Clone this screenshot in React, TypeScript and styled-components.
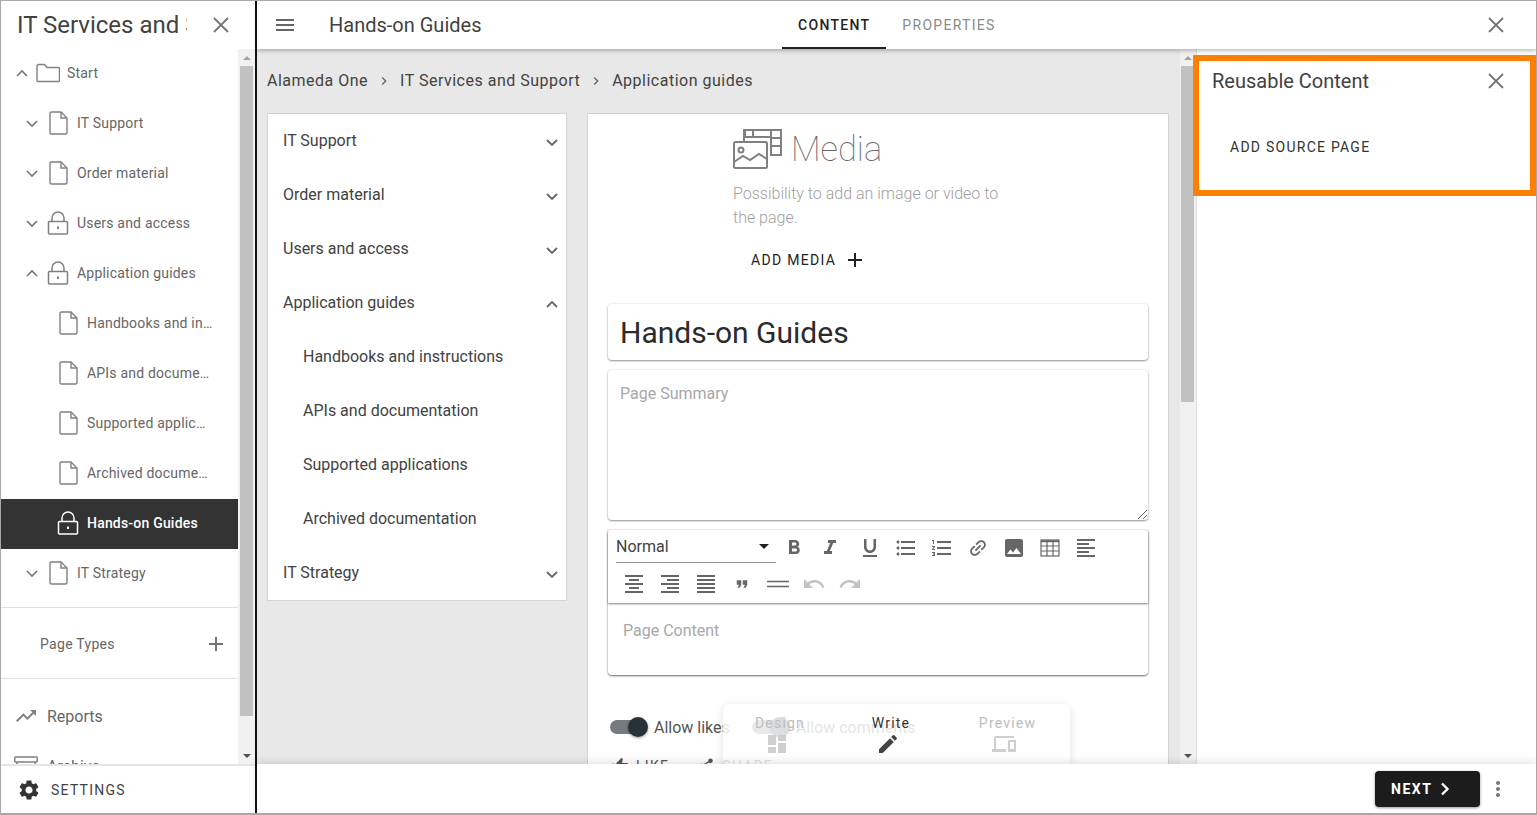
import * as React from 'react';
import styled, { createGlobalStyle } from 'styled-components';
import {
  MdKeyboardArrowRight, MdAdd, MdMenu, MdSettings, MdTrendingUp,
  MdFormatBold, MdFormatItalic, MdFormatUnderlined, MdFormatListBulleted, MdFormatListNumbered, MdLink, MdImage,
  MdFormatAlignLeft, MdFormatAlignCenter, MdFormatAlignRight, MdFormatAlignJustify, MdFormatQuote, MdUndo, MdRedo,
  MdEdit, MdDashboard, MdDevices, MdMoreVert, MdThumbUp, MdShare, MdArrowDropDown,
} from 'react-icons/md';

const GlobalStyle = createGlobalStyle`
  html, body {
    margin: 0;
    padding: 0;
    overflow: hidden;
    background: #fff;
  }
  * {
    box-sizing: border-box;
  }
`;

const Page = styled.div`
  width: 1537px;
  height: 815px;
  border: 1px solid #a8a8a8;
  border-bottom-width: 2px;
  display: flex;
  overflow: hidden;
  font-family: Roboto, "Liberation Sans", sans-serif;
  color: #424242;
`;

/* ---- left sidebar ---- */

const Sidebar = styled.aside`
  width: 256px;
  flex: none;
  display: flex;
  flex-direction: column;
  border-right: 2px solid #111;
  background: #fff;
`;

const SidebarHeader = styled.div`
  height: 48px;
  flex: none;
  display: flex;
  align-items: center;
  padding-left: 16px;
`;

const SidebarTitle = styled.div`
  width: 170px;
  font-size: 24px;
  white-space: nowrap;
  overflow: hidden;
  color: #424242;
`;

const HeaderClose = styled.span`
  margin-left: 22px;
  display: flex;
  color: #757575;
`;

const SidebarBody = styled.div`
  flex: 1;
  min-height: 0;
  display: flex;
`;

const TreeColumn = styled.div`
  width: 237px;
  flex: none;
  overflow: hidden;
`;

const TreeRow = styled.div<{ $depth: number; $active?: boolean }>`
  height: 50px;
  display: flex;
  align-items: center;
  padding-left: ${(p) => 7 + p.$depth * 10}px;
  padding-bottom: 2px;
  background: ${(p) => (p.$active ? '#333' : 'transparent')};
  color: ${(p) => (p.$active ? '#fff' : '#666')};
  font-size: 14px;
  font-weight: ${(p) => (p.$active ? 500 : 400)};
  letter-spacing: 0.2px;
`;

const Caret = styled.span`
  width: 28px;
  height: 24px;
  flex: none;
  display: flex;
  align-items: center;
  justify-content: center;
  color: #757575;
`;

const TreeIcon = styled.span`
  width: 24px;
  flex: none;
  display: flex;
  justify-content: center;
`;

const TreeLabel = styled.span`
  margin-left: 7px;
  max-width: 125.5px;
  overflow: hidden;
  white-space: nowrap;
  text-overflow: ellipsis;
`;

const Divider = styled.div<{ $gap?: number }>`
  height: 1px;
  margin-top: ${(p) => p.$gap ?? 0}px;
  background: #e0e0e0;
`;

const PageTypes = styled.div`
  height: 70px;
  display: flex;
  align-items: center;
  justify-content: space-between;
  padding: 2px 10px 0 39px;
  font-size: 14px;
  letter-spacing: 0.3px;
  color: #666;
`;

const NavList = styled.div`
  padding-top: 12px;
`;

const NavRow = styled.div`
  height: 50px;
  display: flex;
  align-items: center;
  padding-left: 13px;
  gap: 9px;
  font-size: 16px;
  color: #666;
`;

const SidebarFooter = styled.div`
  height: 49px;
  flex: none;
  display: flex;
  align-items: center;
  gap: 10px;
  padding-left: 16px;
  border-top: 2px solid #e6e6e6;
  font-size: 14px;
  letter-spacing: 1.25px;
  color: #424242;
`;

/* ---- scrollbars ---- */

const ScrollTrack = styled.div<{ $wide?: boolean }>`
  width: ${(p) => (p.$wide ? 17 : 16)}px;
  flex: none;
  display: flex;
  flex-direction: column;
  background: #f1f1f1;
`;

const ScrollArrow = styled.div<{ $up?: boolean }>`
  width: 100%;
  height: 17px;
  flex: none;
  display: flex;
  align-items: center;
  justify-content: center;
  &::before {
    content: '';
    border-left: 4px solid transparent;
    border-right: 4px solid transparent;
    ${(p) => (p.$up ? 'border-bottom: 4px solid #a3a3a3;' : 'border-top: 4px solid #505050;')}
  }
`;

const ScrollThumb = styled.div<{ $height: number; $wide?: boolean }>`
  width: 13px;
  height: ${(p) => p.$height}px;
  margin-left: ${(p) => (p.$wide ? 2 : 1)}px;
  flex: none;
  background: #c1c1c1;
`;

const ScrollFill = styled.div`
  flex: 1;
`;

/* ---- main column ---- */

const Main = styled.main`
  flex: 1;
  min-width: 0;
  display: flex;
  flex-direction: column;
`;

const TopBar = styled.header`
  height: 48px;
  flex: none;
  position: relative;
  z-index: 3;
  display: grid;
  grid-template-columns: 72px 453px auto 1fr auto;
  align-items: center;
  background: #fff;
  box-shadow: 0 2px 4px rgba(0, 0, 0, 0.25);
  padding-right: 28px;
`;

const MenuButton = styled.span`
  display: flex;
  justify-content: center;
  padding-right: 16px;
  color: #666;
`;

const TopTitle = styled.div`
  font-size: 20px;
  padding-bottom: 1px;
  color: #424242;
`;

const Tabs = styled.nav`
  display: flex;
  height: 48px;
`;

const Tab = styled.div<{ $active?: boolean }>`
  display: flex;
  align-items: center;
  padding: 2px 16px 0;
  font-size: 14px;
  font-weight: ${(p) => (p.$active ? 500 : 400)};
  letter-spacing: 1.3px;
  color: ${(p) => (p.$active ? '#222' : '#8a8a8a')};
  border-bottom: 2px solid ${(p) => (p.$active ? '#222' : 'transparent')};
`;

const TopClose = styled.span`
  grid-column: 5;
  display: flex;
  color: #757575;
`;

const Workspace = styled.div`
  flex: 1;
  min-height: 0;
  display: flex;
  position: relative;
`;

const CenterScroll = styled.div`
  width: 923px;
  flex: none;
  overflow: hidden;
  background: #e8e8e8;
  padding: 0 11px 0 10px;
`;

const Breadcrumbs = styled.div`
  height: 64px;
  padding-bottom: 2px;
  display: flex;
  align-items: center;
  font-size: 16px;
  letter-spacing: 0.5px;
  color: #424242;
`;

const CrumbSep = styled.span`
  display: flex;
  margin: 2px 8px 0;
  color: #666;
`;

const Columns = styled.div`
  display: flex;
  align-items: flex-start;
  gap: 20px;
`;

const NavCard = styled.div`
  width: 300px;
  flex: none;
  background: #fff;
  border: 1px solid #d4d4d4;
`;

const NavItem = styled.div<{ $sub?: boolean }>`
  height: 54px;
  display: flex;
  align-items: center;
  justify-content: space-between;
  padding: 0 7px 2px ${(p) => (p.$sub ? 35 : 15)}px;
  font-size: 16px;
  color: #424242;
`;

const NavCaret = styled.span`
  display: flex;
  margin-top: 4px;
  color: #666;
`;

const ContentCard = styled.div`
  width: 582px;
  flex: none;
  height: 720px;
  background: #fff;
  border: 1px solid #d4d4d4;
  padding: 0 20px;
`;

const MediaBlock = styled.section`
  margin-left: 125px;
  width: 280px;
  height: 190px;
  padding-top: 14px;
`;

const MediaHead = styled.div`
  display: flex;
  align-items: center;
  gap: 8px;
  height: 42px;
`;

const MediaTitle = styled.div`
  font-size: 34.5px;
  font-weight: 100;
  color: #666;
`;

const MediaText = styled.p`
  margin: 12px 0 0;
  font-size: 16px;
  line-height: 24px;
  font-weight: 300;
  color: #a0a0a0;
`;

const TextButton = styled.div`
  display: flex;
  align-items: center;
  gap: 7px;
  margin: 18px 0 0 18px;
  font-size: 14px;
  letter-spacing: 1.3px;
  color: #222;
`;

const TitleField = styled.div`
  height: 56px;
  display: flex;
  align-items: center;
  padding-left: 12px;
  border-radius: 4px;
  box-shadow: 0 1px 2px rgba(0, 0, 0, 0.4), 0 0 3px rgba(0, 0, 0, 0.1);
  font-size: 30px;
  color: #2b2b2b;
`;

const SummaryField = styled.div`
  position: relative;
  height: 150px;
  margin-top: 10px;
  padding: 14px 12px;
  border-radius: 4px;
  box-shadow: 0 1px 2px rgba(0, 0, 0, 0.4), 0 0 3px rgba(0, 0, 0, 0.1);
  font-size: 16px;
  color: #a8a8a8;
`;

const ResizeGrip = styled.svg`
  position: absolute;
  right: 1px;
  bottom: 1px;
`;

const Editor = styled.div`
  margin-top: 10px;
  height: 145px;
  border-radius: 4px;
  box-shadow: 0 1px 2px rgba(0, 0, 0, 0.55), 0 0 3px rgba(0, 0, 0, 0.1);
`;

const EditorToolbar = styled.div`
  height: 73px;
  display: flex;
  flex-wrap: wrap;
  align-content: flex-start;
  padding-left: 8px;
  box-shadow: 0 1px 2px rgba(0, 0, 0, 0.5);
`;

const StyleSelect = styled.div`
  width: 160px;
  height: 33px;
  display: flex;
  align-items: center;
  justify-content: space-between;
  border-bottom: 1px solid #8f8f8f;
  font-size: 16px;
  color: #424242;
`;

const ToolButton = styled.span<{ $muted?: boolean; $gap?: number }>`
  width: 36px;
  height: 36px;
  margin-left: ${(p) => p.$gap ?? 0}px;
  display: flex;
  align-items: center;
  justify-content: center;
  color: ${(p) => (p.$muted ? '#c2c2c2' : '#666')};
`;

const ToolBreak = styled.div`
  width: 100%;
  height: 0;
`;

const EditorBody = styled.div`
  padding: 18px 15px;
  font-size: 16px;
  color: #a8a8a8;
`;

const ToggleRow = styled.div`
  display: flex;
  align-items: center;
  height: 40px;
  margin-top: 32px;
  padding-left: 2px;
  font-size: 16px;
  color: #555;
`;

const Toggle = styled.span`
  position: relative;
  width: 30px;
  height: 14px;
  border-radius: 7px;
  background: #757c7f;
  flex: none;
  &::after {
    content: '';
    position: absolute;
    left: 18px;
    top: -3px;
    width: 20px;
    height: 20px;
    border-radius: 50%;
    background: #263238;
    box-shadow: 0 1px 3px rgba(0, 0, 0, 0.4);
  }
`;

const ToggleLabel = styled.span`
  margin: 0 22px 0 14px;
`;

const SocialRow = styled.div`
  display: flex;
  align-items: center;
  gap: 7px;
  margin-top: 10px;
  padding-left: 3px;
  font-size: 14px;
  letter-spacing: 1.3px;
  color: #555;
`;

const SocialGap = styled.span`
  width: 14px;
`;

const ModeSwitch = styled.div`
  position: absolute;
  left: 466px;
  bottom: 0;
  width: 347px;
  height: 60px;
  display: grid;
  grid-template-columns: 114px 108px 125px;
  background: rgba(255, 255, 255, 0.84);
  border-radius: 8px 8px 0 0;
  box-shadow: 0 2px 10px rgba(0, 0, 0, 0.12);
`;

const ModeItem = styled.div<{ $active?: boolean }>`
  display: flex;
  flex-direction: column;
  align-items: center;
  padding-top: 11px;
  font-size: 14px;
  letter-spacing: 1.2px;
  color: ${(p) => (p.$active ? '#333' : '#bdbdbd')};
  line-height: 16px;
`;

const ModeIcon = styled.span<{ $active?: boolean }>`
  display: flex;
  margin: 1px 7px 0 0;
  color: ${(p) => (p.$active ? '#444' : '#cfcfcf')};
`;

const RightPanel = styled.aside`
  flex: 1;
  min-width: 0;
  position: relative;
  background: #fff;
  border-left: 1px solid #e0e0e0;
`;

const PanelHeader = styled.div`
  display: flex;
  align-items: center;
  justify-content: space-between;
  height: 24px;
  margin: 20px 28px 0 15px;
  font-size: 20px;
  color: #424242;
`;

const PanelClose = styled.span`
  display: flex;
  color: #757575;
`;

const PanelAction = styled.div`
  margin: 46px 0 0 33px;
  font-size: 14px;
  letter-spacing: 1.25px;
  color: #333;
`;

const Highlight = styled.div`
  position: absolute;
  left: -4px;
  right: 0;
  top: 6px;
  height: 141px;
  border: 6px solid #ff8000;
  pointer-events: none;
`;

const BottomBar = styled.footer`
  height: 49px;
  flex: none;
  position: relative;
  z-index: 3;
  display: flex;
  align-items: center;
  justify-content: flex-end;
  gap: 6px;
  padding-right: 26px;
  background: #fff;
  box-shadow: 0 -2px 8px rgba(0, 0, 0, 0.12);
`;

const NextButton = styled.div`
  width: 105px;
  height: 36px;
  display: flex;
  align-items: center;
  gap: 8px;
  padding-left: 16px;
  border-radius: 4px;
  background: #1c1c1c;
  color: #fff;
  font-size: 14px;
  font-weight: 700;
  letter-spacing: 1.5px;
  box-shadow: 0 1px 3px rgba(0, 0, 0, 0.4);
`;

const MoreButton = styled.span`
  display: flex;
  color: #757575;
`;

/* ---- drawn icons ---- */

const CloseX: React.FC = () => (
  <svg width="24" height="24" viewBox="0 0 24 24" fill="none" stroke="currentColor" strokeWidth="1.8">
    <path d="M5 5l14 14M19 5L5 19" />
  </svg>
);

const Chevron: React.FC<{ up?: boolean; weight?: number }> = ({ up, weight = 1.6 }) => (
  <svg width="14" height="10" viewBox="0 0 14 10" fill="none" stroke="currentColor" strokeWidth={weight}>
    <path d={up ? 'M2 8l5-5 5 5' : 'M2 3l5 5 5-5'} />
  </svg>
);

const NextChevron: React.FC = () => (
  <svg width="10" height="14" viewBox="0 0 10 14" fill="none" stroke="currentColor" strokeWidth="2.4">
    <path d="M2 1.5L7.5 7 2 12.5" />
  </svg>
);

const FolderIcon: React.FC = () => (
  <svg width="24" height="20" viewBox="0 0 24 20" fill="none" stroke="#808080" strokeWidth="1.4">
    <path d="M1 17.5V3a1.5 1.5 0 0 1 1.5-1.5h6L11 4.5h11.5A1 1 0 0 1 23.5 5.5v12a1 1 0 0 1-1 1h-20.5a1 1 0 0 1-1-1z" />
  </svg>
);

const PageIcon: React.FC = () => (
  <svg width="19" height="24" viewBox="0 0 19 24" fill="none" stroke="#808080" strokeWidth="1.4">
    <path d="M12 1H2.5A1.5 1.5 0 0 0 1 2.5v19A1.5 1.5 0 0 0 2.5 23h14a1.5 1.5 0 0 0 1.5-1.5V7z" />
    <path d="M12 1v6h6" />
  </svg>
);

const LockIcon: React.FC<{ color?: string }> = ({ color = '#808080' }) => (
  <svg width="22" height="24" viewBox="0 0 22 24" fill="none" stroke={color} strokeWidth="1.5">
    <path d="M2.5 10.5h17a1 1 0 0 1 1 1v10.5a1 1 0 0 1-1 1h-17a1 1 0 0 1-1-1V11.5a1 1 0 0 1 1-1z" />
    <path d="M5 10.5V7a6 6 0 0 1 12 0v3.5" />
    <path d="M11 15.5v2.5" strokeWidth="2" />
  </svg>
);

const ArchiveIcon: React.FC = () => (
  <svg width="24" height="24" viewBox="0 0 24 24" fill="none" stroke="#808080" strokeWidth="1.5">
    <rect x="0.75" y="3" width="22.5" height="5" rx="1" />
    <path d="M3 8v13h18V8" />
  </svg>
);

const MediaIcon: React.FC = () => (
  <svg width="50" height="40" viewBox="0 0 50 40" fill="none" stroke="#808080" strokeWidth="2">
    <rect x="1" y="13" width="33" height="26" rx="1.5" />
    <circle cx="8" cy="21" r="2.5" />
    <path d="M1 33l9-6 7 4 9-6 8 5" />
    <path d="M11 13V1h37v25H37" />
    <rect x="12" y="1" width="8" height="7" />
    <path d="M38 1v25M38 9h10M38 17h10M20 8h18" />
  </svg>
);

const TableIcon: React.FC = () => (
  <svg width="20" height="20" viewBox="0 0 20 20" fill="none" stroke="#666" strokeWidth="1.2">
    <rect x="1" y="2" width="18" height="16" />
    <path d="M1 3.2h18" strokeWidth="2" />
    <path d="M1 8h18M1 13h18M7 3v15M13 3v15" />
  </svg>
);

const RuleIcon: React.FC = () => (
  <svg width="22" height="10" viewBox="0 0 22 10" fill="none" stroke="#666" strokeWidth="1.5">
    <path d="M0 2.5h22M0 7.5h22" />
  </svg>
);

type TreeItem = {
  label: string;
  depth: number;
  icon: 'folder' | 'page' | 'lock';
  caret?: 'up' | 'down';
  active?: boolean;
};

const tree: TreeItem[] = [
  { label: 'Start', depth: 0, icon: 'folder', caret: 'up' },
  { label: 'IT Support', depth: 1, icon: 'page', caret: 'down' },
  { label: 'Order material', depth: 1, icon: 'page', caret: 'down' },
  { label: 'Users and access', depth: 1, icon: 'lock', caret: 'down' },
  { label: 'Application guides', depth: 1, icon: 'lock', caret: 'up' },
  { label: 'Handbooks and instructions', depth: 2, icon: 'page' },
  { label: 'APIs and documentation', depth: 2, icon: 'page' },
  { label: 'Supported applications', depth: 2, icon: 'page' },
  { label: 'Archived documentation', depth: 2, icon: 'page' },
  { label: 'Hands-on Guides', depth: 2, icon: 'lock', active: true },
  { label: 'IT Strategy', depth: 1, icon: 'page', caret: 'down' },
];

const navItems: { label: string; sub?: boolean; caret?: 'up' | 'down' }[] = [
  { label: 'IT Support', caret: 'down' },
  { label: 'Order material', caret: 'down' },
  { label: 'Users and access', caret: 'down' },
  { label: 'Application guides', caret: 'up' },
  { label: 'Handbooks and instructions', sub: true },
  { label: 'APIs and documentation', sub: true },
  { label: 'Supported applications', sub: true },
  { label: 'Archived documentation', sub: true },
  { label: 'IT Strategy', caret: 'down' },
];

const Scrollbar: React.FC<{ thumb: number; wide?: boolean }> = ({ thumb, wide }) => (
  <ScrollTrack $wide={wide}>
    <ScrollArrow $up />
    <ScrollThumb $height={thumb} $wide={wide} />
    <ScrollFill />
    <ScrollArrow />
  </ScrollTrack>
);

const App: React.FC = () => (
  <Page>
    <GlobalStyle />
    <Sidebar>
      <SidebarHeader>
        <SidebarTitle>IT Services and Support</SidebarTitle>
        <HeaderClose>
          <CloseX />
        </HeaderClose>
      </SidebarHeader>
      <SidebarBody>
        <TreeColumn>
          {tree.map((item) => (
            <TreeRow key={item.label} $depth={item.depth} $active={item.active}>
              <Caret>{item.caret && <Chevron up={item.caret === 'up'} />}</Caret>
              <TreeIcon>
                {item.icon === 'folder' && <FolderIcon />}
                {item.icon === 'page' && <PageIcon />}
                {item.icon === 'lock' && <LockIcon color={item.active ? '#fff' : undefined} />}
              </TreeIcon>
              <TreeLabel>{item.label}</TreeLabel>
            </TreeRow>
          ))}
          <Divider $gap={8} />
          <PageTypes>
            Page Types
            <MdAdd size={24} color="#757575" />
          </PageTypes>
          <Divider />
          <NavList>
            <NavRow>
              <MdTrendingUp size={24} color="#808080" />
              Reports
            </NavRow>
            <NavRow>
              <ArchiveIcon />
              Archive
            </NavRow>
          </NavList>
        </TreeColumn>
        <Scrollbar thumb={650} wide />
      </SidebarBody>
      <SidebarFooter>
        <MdSettings size={24} color="#333" />
        SETTINGS
      </SidebarFooter>
    </Sidebar>

    <Main>
      <TopBar>
        <MenuButton>
          <MdMenu size={24} />
        </MenuButton>
        <TopTitle>Hands-on Guides</TopTitle>
        <Tabs>
          <Tab $active>CONTENT</Tab>
          <Tab>PROPERTIES</Tab>
        </Tabs>
        <TopClose>
          <CloseX />
        </TopClose>
      </TopBar>

      <Workspace>
        <CenterScroll>
          <Breadcrumbs>
            Alameda One
            <CrumbSep>
              <MdKeyboardArrowRight size={16} />
            </CrumbSep>
            IT Services and Support
            <CrumbSep>
              <MdKeyboardArrowRight size={16} />
            </CrumbSep>
            Application guides
          </Breadcrumbs>
          <Columns>
            <NavCard>
              {navItems.map((item) => (
                <NavItem key={item.label} $sub={item.sub}>
                  {item.label}
                  <NavCaret>{item.caret && <Chevron up={item.caret === 'up'} weight={1.8} />}</NavCaret>
                </NavItem>
              ))}
            </NavCard>
            <ContentCard>
              <MediaBlock>
                <MediaHead>
                  <MediaIcon />
                  <MediaTitle>Media</MediaTitle>
                </MediaHead>
                <MediaText>Possibility to add an image or video to the page.</MediaText>
                <TextButton>
                  ADD MEDIA
                  <MdAdd size={24} color="#222" />
                </TextButton>
              </MediaBlock>
              <TitleField>Hands-on Guides</TitleField>
              <SummaryField>
                Page Summary
                <ResizeGrip width="10" height="10" viewBox="0 0 10 10" stroke="#666" strokeWidth="1">
                  <path d="M1 10L10 1M6 10l4-4" />
                </ResizeGrip>
              </SummaryField>
              <Editor>
                <EditorToolbar>
                  <StyleSelect>
                    Normal
                    <MdArrowDropDown size={24} color="#222" />
                  </StyleSelect>
                  <ToolButton><MdFormatBold size={24} /></ToolButton>
                  <ToolButton><MdFormatItalic size={24} /></ToolButton>
                  <ToolButton $gap={4}><MdFormatUnderlined size={24} /></ToolButton>
                  <ToolButton><MdFormatListBulleted size={24} /></ToolButton>
                  <ToolButton><MdFormatListNumbered size={24} /></ToolButton>
                  <ToolButton><MdLink size={22} style={{ transform: 'rotate(-45deg)' }} /></ToolButton>
                  <ToolButton><MdImage size={24} /></ToolButton>
                  <ToolButton><TableIcon /></ToolButton>
                  <ToolButton><MdFormatAlignLeft size={24} /></ToolButton>
                  <ToolBreak />
                  <ToolButton><MdFormatAlignCenter size={24} /></ToolButton>
                  <ToolButton><MdFormatAlignRight size={24} /></ToolButton>
                  <ToolButton><MdFormatAlignJustify size={24} /></ToolButton>
                  <ToolButton><MdFormatQuote size={18} /></ToolButton>
                  <ToolButton><RuleIcon /></ToolButton>
                  <ToolButton $muted><MdUndo size={24} /></ToolButton>
                  <ToolButton $muted><MdRedo size={24} /></ToolButton>
                </EditorToolbar>
                <EditorBody>Page Content</EditorBody>
              </Editor>
              <ToggleRow>
                <Toggle />
                <ToggleLabel>Allow likes</ToggleLabel>
                <Toggle />
                <ToggleLabel>Allow comments</ToggleLabel>
              </ToggleRow>
              <SocialRow>
                <MdThumbUp size={18} />
                LIKE
                <SocialGap />
                <MdShare size={18} />
                SHARE
              </SocialRow>
            </ContentCard>
          </Columns>
        </CenterScroll>
        <Scrollbar thumb={336} />
        <RightPanel>
          <PanelHeader>
            Reusable Content
            <PanelClose>
              <CloseX />
            </PanelClose>
          </PanelHeader>
          <PanelAction>ADD SOURCE PAGE</PanelAction>
          <Highlight />
        </RightPanel>
        <ModeSwitch>
          <ModeItem>
            Design
            <ModeIcon><MdDashboard size={24} /></ModeIcon>
          </ModeItem>
          <ModeItem $active>
            Write
            <ModeIcon $active><MdEdit size={24} /></ModeIcon>
          </ModeItem>
          <ModeItem>
            Preview
            <ModeIcon><MdDevices size={24} /></ModeIcon>
          </ModeItem>
        </ModeSwitch>
      </Workspace>

      <BottomBar>
        <NextButton>
          NEXT
          <NextChevron />
        </NextButton>
        <MoreButton>
          <MdMoreVert size={24} />
        </MoreButton>
      </BottomBar>
    </Main>
  </Page>
);

export default App;
